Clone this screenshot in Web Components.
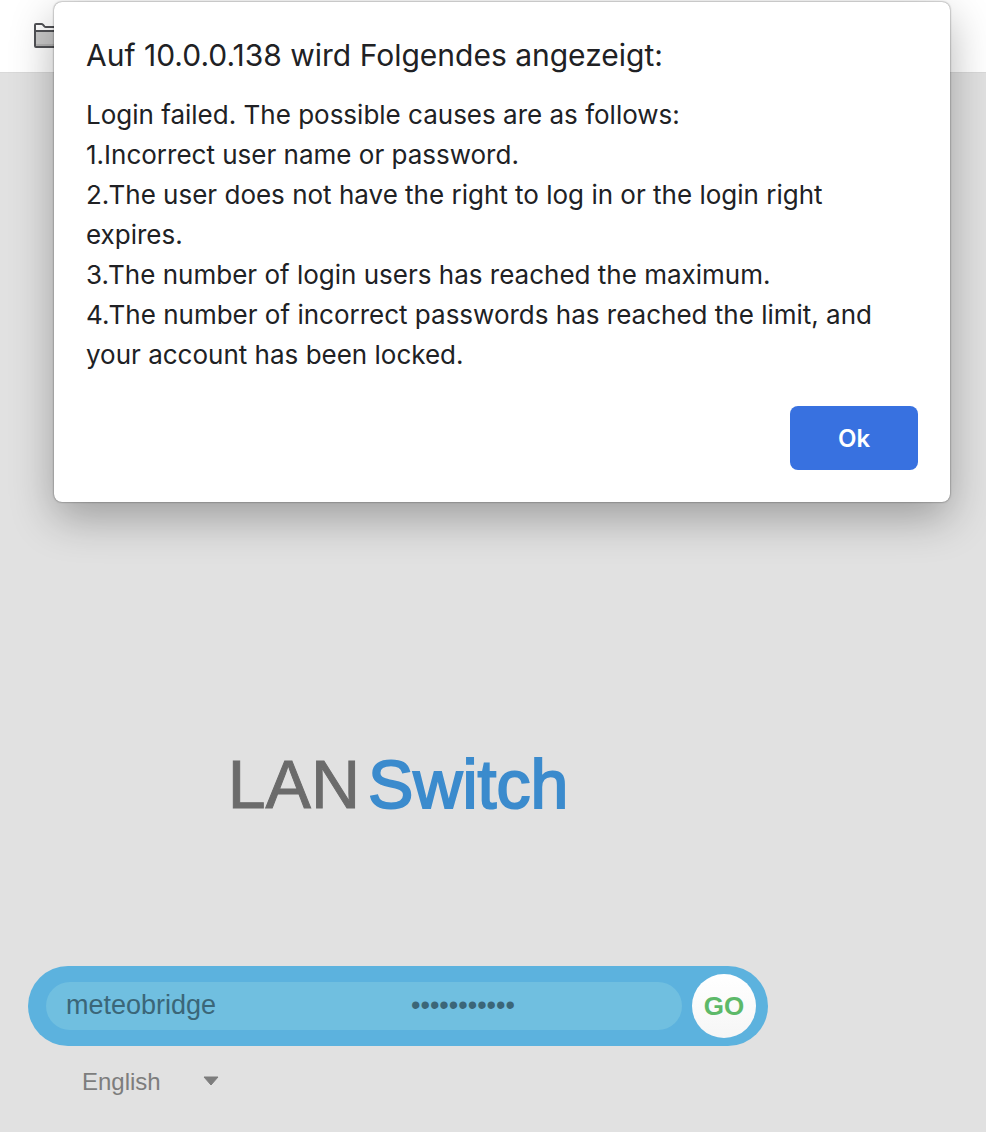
<!DOCTYPE html>
<html lang="en">
<head>
  <meta charset="utf-8">
  <meta name="viewport" content="width=device-width, initial-scale=1">
  <title>LAN Switch</title>
  <style>
    body {
      margin: 0;
      background-color: #e1e1e1;
      font-family: "Liberation Sans", Arial, sans-serif;
    }
  </style>
</head>
<body>
  <login-page>
    <bookmark-bar slot="bar"></bookmark-bar>
    <brand-logo>LAN<span slot="accent">Switch</span></brand-logo>
    <login-form username="meteobridge"></login-form>
    <language-select>
      English
    </language-select>
    <alert-dialog slot="dialog" button="Ok">
      <span slot="title">Auf 10.0.0.138 wird Folgendes angezeigt:</span>
      Login failed. The possible causes are as follows:<br>
      1.Incorrect user name or password.<br>
      2.The user does not have the right to log in or the login right expires.<br>
      3.The number of login users has reached the maximum.<br>
      4.The number of incorrect passwords has reached the limit, and your account has been locked.
    </alert-dialog>
  </login-page>

  <script>
    class LoginPage extends HTMLElement {
      constructor() {
        super();
        this.attachShadow({ mode: 'open' });
      }

      connectedCallback() {
        this.shadowRoot.innerHTML = `
          <style>
            :host {
              display: flex;
              flex-direction: column;
              position: relative;
              min-height: 100vh;
            }
            main {
              flex: 1;
              display: flex;
              flex-direction: column;
              justify-content: flex-end;
              box-sizing: border-box;
              width: 100%;
              max-width: 796px;
              padding: 0 28px 34px;
            }
          </style>
          <slot name="bar"></slot>
          <main><slot></slot></main>
          <slot name="dialog"></slot>
        `;
      }
    }

    class BookmarkBar extends HTMLElement {
      constructor() {
        super();
        this.attachShadow({ mode: 'open' });
      }

      connectedCallback() {
        this.shadowRoot.innerHTML = `
          <style>
            :host {
              display: flex;
              align-items: center;
              box-sizing: border-box;
              height: 73px;
              padding: 0 33px;
              background-color: #ffffff;
              border-bottom: 1px solid #d9d9d9;
            }
            svg {
              display: block;
            }
          </style>
          <svg width="32" height="28" viewBox="0 0 32 28" aria-hidden="true">
            <path d="M2 9H30V24a1 1 0 0 1-1 1H3a1 1 0 0 1-1-1Z" fill="#c9c9c9"/>
            <path d="M2 22H30V24a1 1 0 0 1-1 1H3a1 1 0 0 1-1-1Z" fill="#b4b4b4"/>
            <path d="M2 24V3a1 1 0 0 1 1-1H8.500a2 2 0 0 1 1.400.6L11.400 4.400a2 2 0 0 0 1.400.6H28.500a1.500 1.500 0 0 1 1.500 1.500V24a1 1 0 0 1-1 1H3a1 1 0 0 1-1-1ZM2 9H30" fill="none" stroke="#505155" stroke-width="2"/>
          </svg>
        `;
      }
    }

    class BrandLogo extends HTMLElement {
      constructor() {
        super();
        this.attachShadow({ mode: 'open' });
      }

      connectedCallback() {
        this.shadowRoot.innerHTML = `
          <style>
            :host {
              display: flex;
              justify-content: center;
              gap: 8px;
              margin-bottom: 142px;
              font-size: 68px;
              line-height: 80px;
              color: #6b6b6b;
              -webkit-text-stroke: 1px #6b6b6b;
            }
            .accent {
              color: #3b8bcd;
              -webkit-text-stroke: 2px #3b8bcd;
            }
          </style>
          <span><slot></slot></span>
          <span class="accent"><slot name="accent"></slot></span>
        `;
      }
    }

    class LoginForm extends HTMLElement {
      constructor() {
        super();
        this.attachShadow({ mode: 'open' });
      }

      connectedCallback() {
        this.shadowRoot.innerHTML = `
          <style>
            :host {
              display: block;
            }
            form {
              display: flex;
              align-items: center;
              gap: 10px;
              height: 80px;
              box-sizing: border-box;
              padding: 0 12px 0 18px;
              border-radius: 40px;
              background-color: #5cb2de;
            }
            .fields {
              flex: 1;
              display: grid;
              grid-template-columns: 1fr 1fr;
              column-gap: 74px;
              height: 48px;
              padding-left: 20px;
              border-radius: 24px;
              background-color: #70bfe0;
            }
            input {
              min-width: 0;
              padding: 0 0 2px;
              border: none;
              outline: none;
              background: transparent;
              font-family: inherit;
              font-size: 27px;
              color: #3b6678;
            }
            button {
              width: 64px;
              height: 64px;
              padding: 0;
              border: none;
              border-radius: 50%;
              background: linear-gradient(#ffffff, #f6f6f6);
              font-family: inherit;
              font-size: 26px;
              font-weight: bold;
              color: #5db969;
              cursor: pointer;
            }
          </style>
          <form>
            <div class="fields">
              <input type="text" name="username" aria-label="User name" spellcheck="false" value="${this.getAttribute('username') || ''}">
              <input type="password" name="password" aria-label="Password" value="placeholder">
            </div>
            <button type="submit">GO</button>
          </form>
        `;
        this.shadowRoot.querySelector('form').addEventListener('submit', (event) => event.preventDefault());
      }
    }

    class LanguageSelect extends HTMLElement {
      constructor() {
        super();
        this.attachShadow({ mode: 'open' });
      }

      connectedCallback() {
        this.shadowRoot.innerHTML = `
          <style>
            :host {
              display: grid;
              grid-template-columns: 137px;
              align-items: center;
              margin: 19px 54px 1px;
            }
            select, svg {
              grid-area: 1 / 1;
            }
            select {
              appearance: none;
              height: 32px;
              padding: 0;
              border: none;
              outline: none;
              background: transparent;
              font-family: inherit;
              font-size: 24px;
              color: #7d7d7d;
            }
            svg {
              justify-self: end;
              pointer-events: none;
            }
          </style>
          <select aria-label="Language">
            <option>${this.textContent.trim()}</option>
          </select>
          <svg width="16" height="10" viewBox="0 0 16 10" aria-hidden="true">
            <path d="M1 1H15L8 9Z" fill="#7d7d7d" stroke="#7d7d7d" stroke-linejoin="round"/>
          </svg>
        `;
      }
    }

    class AlertDialog extends HTMLElement {
      constructor() {
        super();
        this.attachShadow({ mode: 'open' });
      }

      connectedCallback() {
        this.shadowRoot.innerHTML = `
          <style>
            /* floats over the bookmark bar and the page */
            :host {
              position: absolute;
              top: 2px;
              left: 54px;
              right: 36px;
              font-family: Inter, sans-serif;
              color: #202124;
            }
            dialog {
              position: static;
              box-sizing: border-box;
              width: 100%;
              max-width: none;
              margin: 0;
              padding: 32px;
              border: none;
              border-radius: 8px;
              background-color: #ffffff;
              color: inherit;
              box-shadow: 0 0 2px rgba(0, 0, 0, 0.6), 0 16px 44px rgba(0, 0, 0, 0.3);
            }
            h2 {
              margin: 0 0 19px;
              font-size: 30px;
              font-weight: 400;
              line-height: 42px;
            }
            p {
              margin: 0 0 31px;
              font-size: 26px;
              line-height: 40px;
            }
            .actions {
              display: flex;
              justify-content: flex-end;
            }
            button {
              width: 128px;
              height: 64px;
              padding: 0;
              border: none;
              outline: none;
              border-radius: 8px;
              background-color: #3871e0;
              font-family: inherit;
              font-size: 24px;
              font-weight: 600;
              color: #ffffff;
              cursor: pointer;
            }
          </style>
          <dialog open aria-labelledby="title">
            <h2 id="title"><slot name="title"></slot></h2>
            <p><slot></slot></p>
            <div class="actions">
              <button type="button">${this.getAttribute('button')}</button>
            </div>
          </dialog>
        `;
        this.shadowRoot.querySelector('button').addEventListener('click', () => this.remove());
      }
    }

    customElements.define('login-page', LoginPage);
    customElements.define('bookmark-bar', BookmarkBar);
    customElements.define('brand-logo', BrandLogo);
    customElements.define('login-form', LoginForm);
    customElements.define('language-select', LanguageSelect);
    customElements.define('alert-dialog', AlertDialog);
  </script>
</body>
</html>
